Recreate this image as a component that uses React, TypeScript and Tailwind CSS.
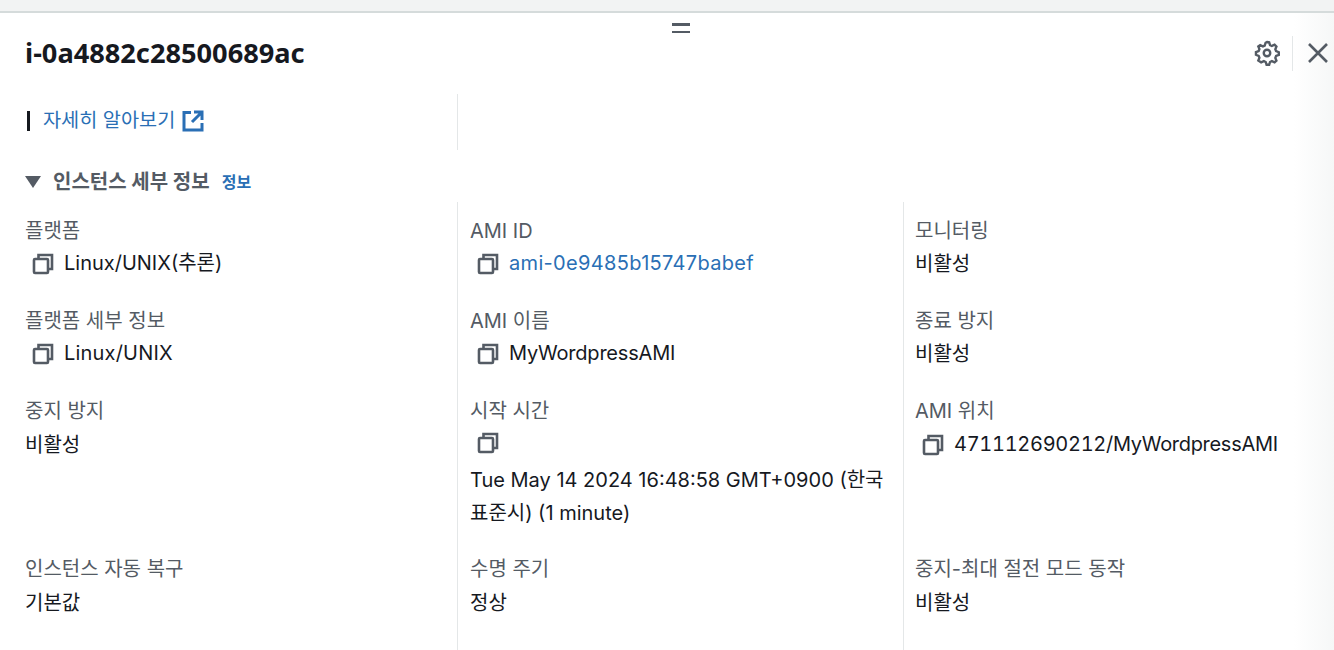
const FONT = "font-['Inter','Noto_Sans_CJK_KR',sans-serif]";

function CopyIcon() {
  return (
    <svg width="22" height="22" viewBox="0 0 22 22" fill="none" stroke="#545b64" strokeWidth="2.6" className="shrink-0">
      <rect x="2" y="6" width="14" height="14" rx="1" />
      <path d="M6.500 5.500V2h13.500v14h-3.500" />
    </svg>
  );
}

function Field({ label, children }: { label: string; children: React.ReactNode }) {
  return (
    <div className="flex flex-col">
      <div className="h-[30px] text-[20px] leading-[30px] text-[#545b64]">{label}</div>
      <div className="mt-[1px] text-[20px] leading-[33px] text-[#16191f]">{children}</div>
    </div>
  );
}

function Copy({ children, link }: { children: React.ReactNode; link?: boolean }) {
  return (
    <div className="flex items-center gap-[10px] pl-[7px]">
      <CopyIcon />
      <span className={link ? "text-[#2a6fb5]" : ""}>{children}</span>
    </div>
  );
}

const cols = [
  [
    { h: 90, label: "플랫폼", v: <Copy>Linux/UNIX(추론)</Copy> },
    { h: 90, label: "플랫폼 세부 정보", v: <Copy><span className="tracking-[0.2px]">Linux/UNIX</span></Copy> },
    { h: 158, label: "중지 방지", v: <div className="pt-[2px]">비활성</div> },
    { h: 90, label: "인스턴스 자동 복구", v: <div className="pt-[2px]">기본값</div> },
  ],
  [
    { h: 90, label: "AMI ID", v: <Copy link><span className="tracking-[0.33px]">ami-0e9485b15747babef</span></Copy> },
    { h: 90, label: "AMI 이름", v: <Copy><span className="tracking-[-0.2px]">MyWordpressAMI</span></Copy> },
    {
      h: 158,
      label: "시작 시간",
      v: (
        <div>
          <div className="flex h-[32px] items-center pl-[7px]"><CopyIcon /></div>
          <div className="mt-[5px] w-[425px]">Tue May 14 2024 16:48:58 GMT+0900 (한국 표준시) (1 minute)</div>
        </div>
      ),
    },
    { h: 90, label: "수명 주기", v: <div className="pt-[2px]">정상</div> },
  ],
  [
    { h: 90, label: "모니터링", v: <div className="pt-[1px]">비활성</div> },
    { h: 90, label: "종료 방지", v: <div className="pt-[1px]">비활성</div> },
    {
      h: 158,
      label: "AMI 위치",
      v: (
        <div className="pt-[1px]">
          <Copy>
            <span className="tabular-nums tracking-[-0.3px]">471112690212</span>
            <span className="tracking-[-0.3px]">/MyWordpressAMI</span>
          </Copy>
        </div>
      ),
    },
    { h: 90, label: "중지-최대 절전 모드 동작", v: <div className="pt-[2px]">비활성</div> },
  ],
];

export default function App() {
  return (
    <div className={`relative h-[650px] w-[1334px] overflow-hidden bg-white ${FONT}`}>
      <div className="absolute right-0 top-0 h-full w-[40px] bg-gradient-to-l from-[#f6f7f7] to-transparent" />
      <div className="relative h-[13px] border-b-2 border-[#d5dbdb] bg-[#f2f3f3]" />
      <div className="absolute left-[672px] top-[23px] flex h-[10px] w-[18px] flex-col justify-between">
        <div className="h-[2.500px] bg-[#545b64]" />
        <div className="h-[2.500px] bg-[#545b64]" />
      </div>
      <div className="relative flex h-[81px] items-center justify-between pl-[25px] pb-[1px]">
        <h1 className="font-['Noto_Sans',sans-serif] text-[27.200px] leading-[36px] font-bold text-[#16191f]">i-0a4882c28500689ac</h1>
        <div className="flex items-center">
          <svg width="26" height="26" viewBox="0 0 24 24" fill="none" stroke="#545b64" strokeWidth="2.2">
            <circle cx="12" cy="12" r="3" />
            <path d="M12 1.800l2 .3.8 2.600 1.700.8 2.500-1.100 1.700 1.600-1 2.500.7 1.800 2.500 1v2.400l-2.500 1-.7 1.800 1 2.500-1.700 1.600-2.500-1.100-1.700.8-.8 2.600h-2.400l-.8-2.600-1.700-.8-2.500 1.100L4 18.900l1-2.500-.7-1.800-2.500-1v-2.400l2.500-1 .7-1.800-1-2.500L5.700 4.800l2.500 1.100 1.700-.8.8-2.600z" />
          </svg>
          <div className="ml-[12px] h-[35px] w-px bg-[#e4e7e8]" />
          <svg width="22" height="22" viewBox="0 0 22 22" fill="none" stroke="#545b64" strokeWidth="2.600" className="ml-[14px] mr-[5px]">
            <path d="M2 2l18 18M20 2L2 20" />
          </svg>
        </div>
      </div>
      <div className="relative flex h-[56px]">
        <div className="flex w-[457px] items-center pl-[27px] pb-[3px]">
          <div className="h-[20px] w-[2.500px] bg-[#16191f]" />
          <a className="ml-[13.500px] text-[19.700px] text-[#2a6fb5]">자세히 알아보기</a>
          <svg width="22" height="22" viewBox="0 0 22 22" fill="none" stroke="#2a6fb5" strokeWidth="3" className="ml-[7px]">
            <path d="M9 2.500H2v17.500h18v-7M12 2h8v8M20 2L10 12" />
          </svg>
        </div>
        <div className="w-px bg-[#e4e7e8]" />
      </div>
      <div className="relative flex h-[52px] items-center pl-[25px] pt-[12px]">
        <div className="h-0 w-0 border-x-[8px] border-t-[12px] border-x-transparent border-t-[#545b64]" />
        <span className="ml-[12px] text-[20px] font-bold text-[#545b64]">인스턴스 세부 정보</span>
        <span className="ml-[12px] text-[16px] font-bold text-[#2a6fb5]">정보</span>
      </div>
      <div className="relative flex">
        {cols.map((col, i) => (
          <div
            key={i}
            className={
              i === 0
                ? "w-[457px] pl-[25px] pt-[14px]"
                : i === 1
                  ? "w-[446px] border-l border-[#e4e7e8] pl-[12px] pt-[14px]"
                  : "h-[448px] flex-1 border-l border-[#e4e7e8] pl-[11px] pt-[14px]"
            }
          >
            {col.map((f) => (
              <div key={f.label} style={{ height: f.h }}>
                <Field label={f.label}>{f.v}</Field>
              </div>
            ))}
          </div>
        ))}
      </div>
    </div>
  );
}
